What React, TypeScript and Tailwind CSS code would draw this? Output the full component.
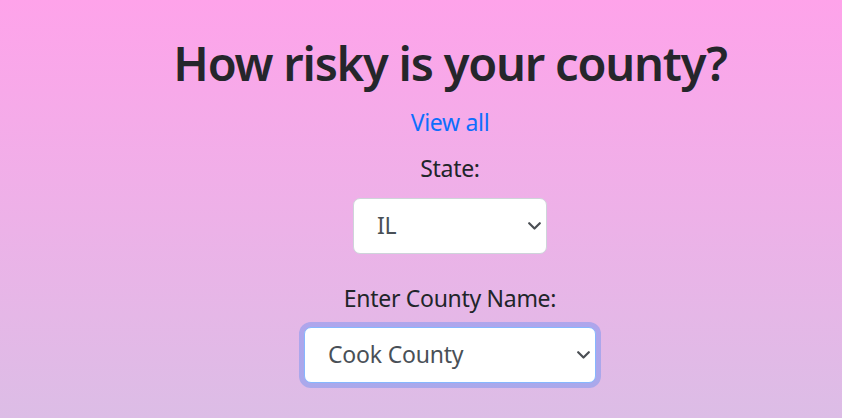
import React from 'react';

function Chevron() {
  return (
    <svg width="13" height="8" viewBox="0 0 13 8" className="pointer-events-none absolute top-1/2 right-[6px] -translate-y-1/2">
      <path d="M1.2 1.2 L6.5 6.5 L11.8 1.2" fill="none" stroke="#4b4f54" strokeWidth="2.2" strokeLinecap="round" strokeLinejoin="round" />
    </svg>
  );
}

function Picker({ value, width, focused }: { value: string; width: string; focused?: boolean }) {
  return (
    <div className={`relative ${width}`}>
      <select
        defaultValue={value}
        className={`block h-[56px] w-full appearance-none rounded-[7px] border bg-white pl-[23px] text-[23px] tracking-[-0.2px] text-[#495057] outline-none ${
          focused ? 'border-[#86b7fe] shadow-[0_0_0_5px_rgba(13,110,253,0.25)]' : 'border-[#ced4da]'
        }`}
      >
        <option>{value}</option>
      </select>
      <Chevron />
    </div>
  );
}

export default function App() {
  return (
    <div
      className="min-h-[418px] w-full bg-gradient-to-b from-[#fea3ea] to-[#dcbde6] text-[#212529]"
      style={{ fontFamily: '"Noto Sans", "Open Sans", sans-serif' }}
    >
      <div className="flex flex-col items-center pl-[58px] pt-[35px]">
        <h1 className="text-[47px] leading-[57.6px] font-semibold tracking-[-1.2px] text-[#25262b]">How risky is your county?</h1>
        <a href="#" className="mt-[11px] text-[23px] leading-[36px] tracking-[-0.3px] text-[#0d6efd]">View all</a>
        <label className="mt-[10px] text-[23px] leading-[36px] tracking-[-0.3px]">State:</label>
        <div className="mt-[12px]">
          <Picker value="IL" width="w-[194px]" />
        </div>
        <label className="mt-[26px] text-[23px] leading-[36px] tracking-[-0.3px]">Enter County Name:</label>
        <div className="mt-[11px]">
          <Picker value="Cook County" width="w-[292px]" focused />
        </div>
      </div>
    </div>
  );
}
